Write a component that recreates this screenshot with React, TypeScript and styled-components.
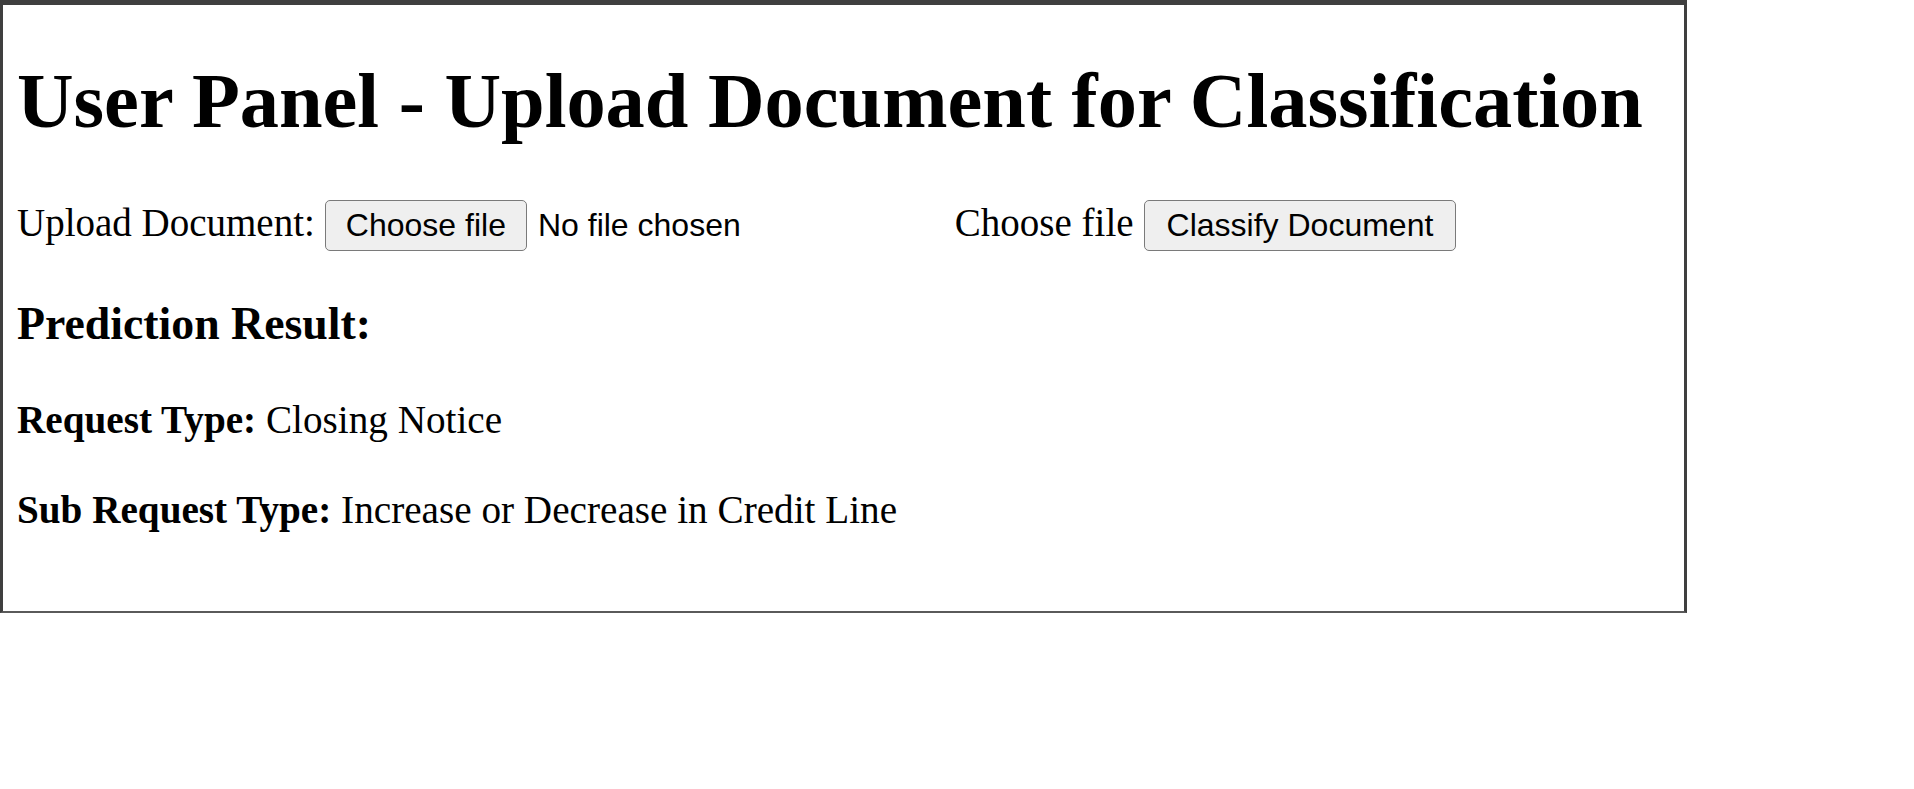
import React from "react";
import styled, { createGlobalStyle } from "styled-components";

const GlobalStyle = createGlobalStyle`
  html, body {
    margin: 0;
    padding: 0;
    background: #ffffff;
  }
  body {
    font-family: "Liberation Serif", "Times New Roman", serif;
    color: #000000;
  }
`;

const Frame = styled.div`
  width: 1687px;
  box-sizing: border-box;
  border-top: 5px solid #3f3f3f;
  border-left: 3px solid #3f3f3f;
  border-right: 3px solid #3f3f3f;
  border-bottom: 2px solid #5a5a5a;
  padding: 0 14px 79px;
  display: flow-root;
`;

const Title = styled.h1`
  font-size: 78.4px;
  line-height: 88px;
  font-weight: 700;
  margin: 52px 0 52px;
  white-space: nowrap;
`;

const UploadRow = styled.div`
  display: flex;
  align-items: baseline;
  gap: 10px;
  font-size: 39px;
  line-height: 51px;
`;

const FileInput = styled.div`
  width: 620px;
  display: flex;
  align-items: baseline;
  gap: 11px;
`;

const FileName = styled.span`
  font-family: "Liberation Sans", Arial, sans-serif;
  font-size: 32px;
`;

const NativeButton = styled.button<{ $pad: number }>`
  font-family: "Liberation Sans", Arial, sans-serif;
  font-size: 32px;
  line-height: 37px;
  color: #000000;
  background: #efefef;
  border: 1px solid #7a7a7a;
  border-radius: 5px;
  padding: 6px ${(p) => p.$pad}px;
  margin: 0;
  cursor: pointer;
`;

const SectionTitle = styled.h3`
  font-size: 45.8px;
  line-height: 52px;
  font-weight: 700;
  margin: 47px 0 48px;
`;

const ResultLine = styled.p<{ $last?: boolean }>`
  font-size: 39.2px;
  line-height: 44px;
  margin: 0 0 ${(p) => (p.$last ? 0 : 46)}px;
`;

const App = () => {
  return (
    <>
      <GlobalStyle />
      <Frame>
        <Title>User Panel - Upload Document for Classification</Title>

        <UploadRow>
          <span>Upload Document:</span>
          <FileInput>
            <NativeButton type="button" $pad={20}>
              Choose file
            </NativeButton>
            <FileName>No file chosen</FileName>
          </FileInput>
          <span>Choose file</span>
          <NativeButton type="button" $pad={22}>
            Classify Document
          </NativeButton>
        </UploadRow>

        <SectionTitle>Prediction Result:</SectionTitle>
        <ResultLine>
          <strong>Request Type:</strong> Closing Notice
        </ResultLine>
        <ResultLine $last>
          <strong>Sub Request Type:</strong> Increase or Decrease in Credit Line
        </ResultLine>
      </Frame>
    </>
  );
};

export default App;
